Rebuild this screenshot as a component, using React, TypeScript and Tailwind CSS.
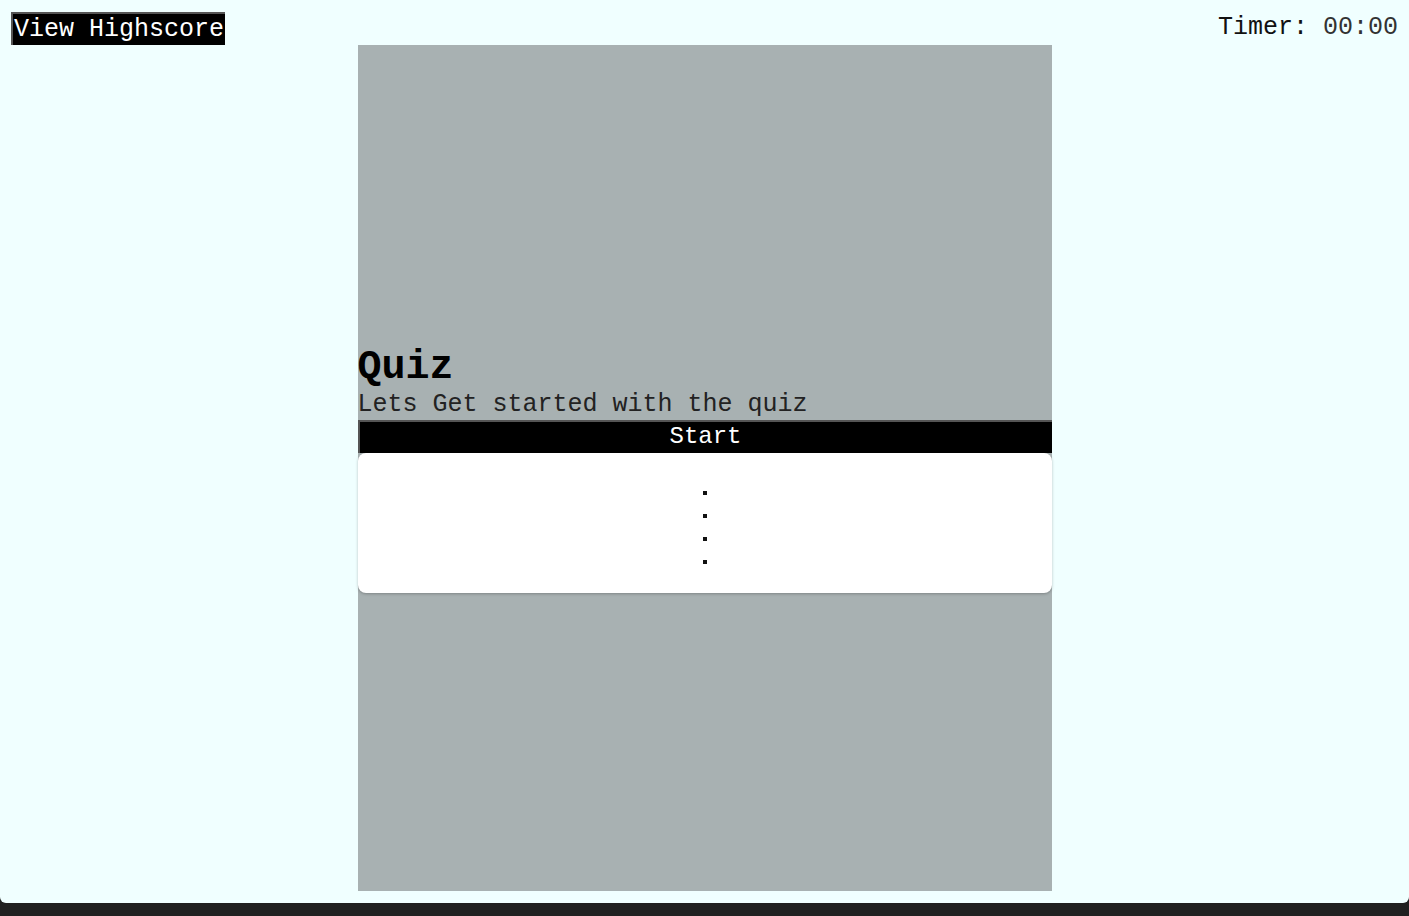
import React from 'react';

const mono = { fontFamily: '"Liberation Mono", "Courier New", monospace' };

const App: React.FC = () => {
  const bullets = [0, 1, 2, 3];

  return (
    <div className="h-[916px] bg-[#202020] flex flex-col" style={mono}>
      <div className="h-[903px] bg-[#f0ffff] rounded-b-[6px] flex flex-col">
        <header className="h-[45px] flex items-start justify-between">
          <button className="mt-[12px] ml-[11px] h-[33px] px-[1px] bg-black text-white text-[25px] leading-[30px] border-t-2 border-l-2 border-[#555]">
            View Highscore
          </button>
          <div className="mt-[13px] mr-[11px] text-[25px] leading-[30px] text-[#111]">
            Timer: <span className="text-[#333]">00:00</span>
          </div>
        </header>

        <main className="w-[694px] h-[846px] mx-auto bg-[#a8b1b2] flex flex-col justify-center">
          <h1 className="pt-[2px] text-[40px] font-bold leading-[44px] text-black">Quiz</h1>
          <p className="text-[25px] leading-[30px] text-[#222]">Lets Get started with the quiz</p>
          <button className="h-[33px] w-full bg-black text-white text-[24px] leading-[28px] border-t-2 border-l-2 border-[#555]">
            Start
          </button>
          <div className="bg-white rounded-[8px] shadow-[0_1px_3px_rgba(0,0,0,0.25)] pt-[29px] pb-[19px] flex flex-col items-center">
            {bullets.map((b) => (
              <div key={b} className="h-[23px] flex items-center justify-center">
                <span className="block w-[4px] h-[4px] bg-[#111]" />
              </div>
            ))}
          </div>
        </main>
      </div>
    </div>
  );
};

export default App;
